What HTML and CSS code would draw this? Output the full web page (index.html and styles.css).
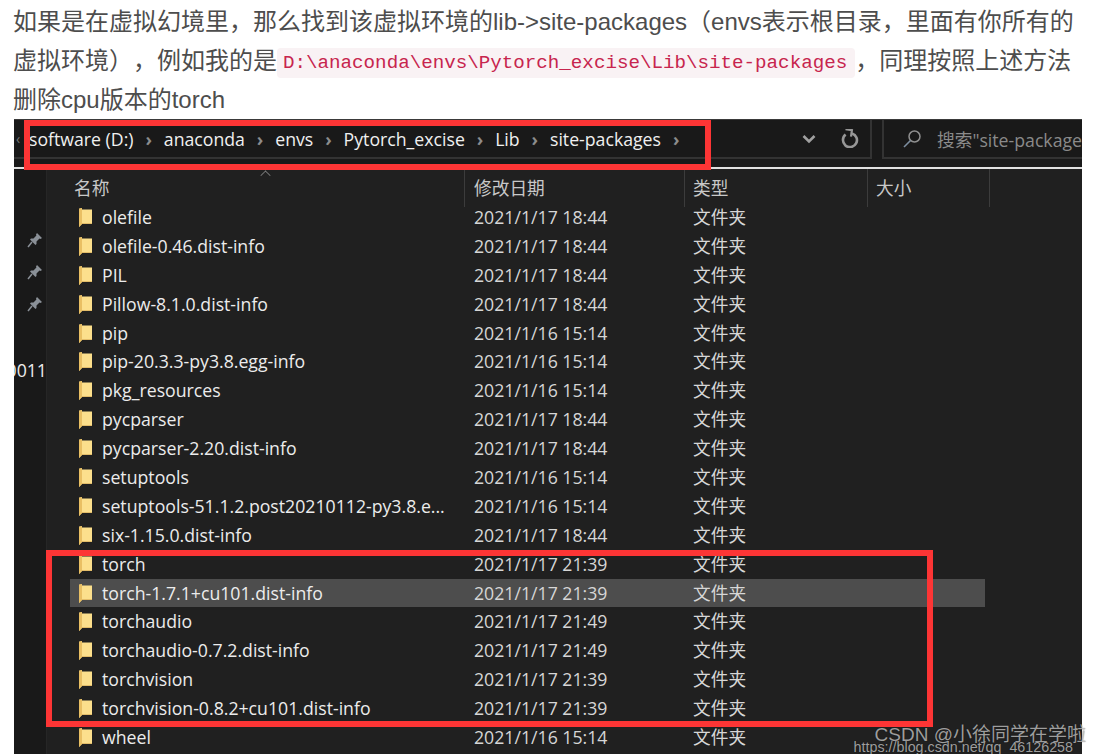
FILE: index.html
```html
<!DOCTYPE html>
<html lang="zh-CN">
<head>
    <meta charset="UTF-8">
    <title>删除cpu版本的torch</title>
    <link rel="stylesheet" href="styles.css">
</head>
<body>
    <svg class="defs" width="0" height="0">
        <symbol id="folder" viewBox="0 0 13 19">
            <path d="M0 .8 L3 0 V1.5 H13 V16 H3 L0 19 Z" fill="#fcdf8c"/>
            <path d="M0 .8 L3 0 V1.5 H3 V16 L0 19 Z" fill="#e9bf63"/>
            <path d="M3 15 H13 V16 H3 Z" fill="#e3bd6a"/>
        </symbol>
        <symbol id="pin" viewBox="0 0 16 16">
            <path d="M10 1 L15 6 L13.5 7 L12.5 6.6 L9.5 9.5 L9.5 12 L8.5 13 L3 7.5 L4 6.5 L6.5 6.5 L9.4 3.5 L9 2.5 Z" fill="#8a9097"/>
            <path d="M5 10 L1 15" stroke="#8a9097" stroke-width="1.5"/>
        </symbol>
    </svg>

    <p class="intro">如果是在虚拟幻境里，那么找到该虚拟环境的lib-&gt;site-packages（envs表示根目录，里面有你所有的虚拟环境），例如我的是<code>D:\anaconda\envs\Pytorch_excise\Lib\site-packages</code>，同理按照上述方法删除cpu版本的torch</p>

    <div class="explorer">
        <div class="toolbar">
            <div class="address">
                <span class="back">‹</span>
                <div class="crumbs">
                    <span>software (D:)</span><i>›</i>
                    <span>anaconda</span><i>›</i>
                    <span>envs</span><i>›</i>
                    <span>Pytorch_excise</span><i>›</i>
                    <span>Lib</span><i>›</i>
                    <span>site-packages</span><i>›</i>
                </div>
                <div class="tool-btn">
                    <svg width="14" height="10" viewBox="0 0 14 10"><path d="M1.5 2 L7 7.5 L12.5 2" fill="none" stroke="#a0a0a0" stroke-width="2.6"/></svg>
                </div>
                <div class="tool-btn">
                    <svg width="18" height="19" viewBox="0 0 18 19"><path d="M4.6 5.6 A7 7 0 1 0 11 4.4" fill="none" stroke="#979797" stroke-width="2.6"/><path d="M4 1 H10.5 V7.5" fill="none" stroke="#979797" stroke-width="2.2" transform="rotate(8 10 4)"/></svg>
                </div>
            </div>
            <div class="search">
                <svg width="20" height="20" viewBox="0 0 20 20"><circle cx="12.5" cy="7.5" r="5.5" fill="none" stroke="#8f8f8f" stroke-width="1.5"/><path d="M8.5 11.5 L2 18" stroke="#7d8ea0" stroke-width="1.6"/></svg>
                <span>搜索"site-packages"</span>
            </div>
        </div>

        <div class="body">
            <div class="nav">
                <div class="pins">
                    <svg width="16" height="16"><use href="#pin"/></svg>
                    <svg width="16" height="16"><use href="#pin"/></svg>
                    <svg width="16" height="16"><use href="#pin"/></svg>
                </div>
                <div class="nav-label">0011</div>
            </div>
            <div class="main">
                <div class="list-head">
                    <div class="col-name"><span>名称</span><b class="sort"></b></div>
                    <div class="col-date">修改日期</div>
                    <div class="col-type">类型</div>
                    <div class="col-size">大小</div>
                </div>
                <ul class="files" id="files"></ul>
            </div>
        </div>

        <div class="mark mark-path"></div>
        <div class="mark mark-torch"></div>
    </div>

    <div class="watermark">
        <div>CSDN @小徐同学在学啦</div>
        <div class="url">https://blog.csdn.net/qq_46126258</div>
    </div>

    <script>
        const files = [
            ['olefile', '2021/1/17 18:44'],
            ['olefile-0.46.dist-info', '2021/1/17 18:44'],
            ['PIL', '2021/1/17 18:44'],
            ['Pillow-8.1.0.dist-info', '2021/1/17 18:44'],
            ['pip', '2021/1/16 15:14'],
            ['pip-20.3.3-py3.8.egg-info', '2021/1/16 15:14'],
            ['pkg_resources', '2021/1/16 15:14'],
            ['pycparser', '2021/1/17 18:44'],
            ['pycparser-2.20.dist-info', '2021/1/17 18:44'],
            ['setuptools', '2021/1/16 15:14'],
            ['setuptools-51.1.2.post20210112-py3.8.e...', '2021/1/16 15:14'],
            ['six-1.15.0.dist-info', '2021/1/17 18:44'],
            ['torch', '2021/1/17 21:39'],
            ['torch-1.7.1+cu101.dist-info', '2021/1/17 21:39'],
            ['torchaudio', '2021/1/17 21:49'],
            ['torchaudio-0.7.2.dist-info', '2021/1/17 21:49'],
            ['torchvision', '2021/1/17 21:39'],
            ['torchvision-0.8.2+cu101.dist-info', '2021/1/17 21:39'],
            ['wheel', '2021/1/16 15:14']
        ];

        const list = document.getElementById('files');
        files.forEach(function(f, i) {
            const li = document.createElement('li');
            li.className = i === 13 ? 'file selected' : 'file';
            li.innerHTML = '<svg class="folder" width="13" height="19"><use href="#folder"/></svg>'
                + '<span class="col-name">' + f[0] + '</span>'
                + '<span class="col-date">' + f[1] + '</span>'
                + '<span class="col-type">文件夹</span>';
            list.appendChild(li);
        });
    </script>
</body>
</html>
```

FILE: styles.css
```css
* {
    box-sizing: border-box;
}

html, body {
    height: 754px;
    overflow: hidden;
}

body {
    position: relative;
    margin: 0;
    padding: 0 20px 0 14px;
    background: #fff;
    font-family: "Liberation Sans", "Noto Sans CJK SC", sans-serif;
}

.defs {
    position: absolute;
}

/* Paragraph above the screenshot */
.intro {
    margin: 0 0 0 -1px;
    padding-top: 2px;
    height: 119px;
    font-size: 24px;
    line-height: 39px;
    color: #4d4d4d;
    text-spacing-trim: space-all;
    font-feature-settings: "chws" 0;
}

.intro code {
    display: inline-block;
    height: 30px;
    padding: 0 8px 0 6px;
    line-height: 30px;
    vertical-align: 1px;
    font-family: "Liberation Mono", monospace;
    font-size: 19.2px;
    color: #c7254e;
    background: #f9f2f4;
    border-radius: 4px;
}

/* Explorer window */
.explorer {
    position: relative;
    height: 635px;
    background: #202020;
    font-family: "Open Sans", "Noto Sans CJK SC", sans-serif;
    font-size: 17.7px;
    color: #ececec;
    overflow: hidden;
}

.toolbar {
    display: flex;
    height: 50px;
    background: #191919;
    border-top: 1px solid #3a3a3a;
    border-bottom: 2px solid #e0e0e0;
}

.address {
    display: flex;
    align-items: center;
    flex: none;
    width: 858px;
    height: 39px;
    border-right: 2px solid #333;
    border-bottom: 2px solid #333;
}

.back {
    width: 15px;
    padding-left: 2px;
    color: #777;
    font-size: 14px;
}

.crumbs {
    display: flex;
    align-items: center;
    width: 759px;
    color: #f0f0f0;
}

.crumbs i {
    width: 30.3px;
    text-align: center;
    font-style: normal;
    font-weight: 700;
    color: #8c8c8c;
}

.tool-btn {
    display: flex;
    justify-content: center;
    align-items: center;
    width: 41px;
    height: 36px;
}

.search {
    display: flex;
    align-items: center;
    gap: 15px;
    margin-left: 10px;
    padding-left: 18px;
    height: 39px;
    flex: 1;
    min-width: 0;
    overflow: hidden;
    white-space: nowrap;
    color: #8a8a8a;
    border-left: 2px solid #333;
    border-bottom: 2px solid #333;
}

.search svg {
    flex: none;
}

.body {
    display: flex;
}

.nav {
    flex: none;
    width: 33px;
    height: 585px;
    background: #191919;
    border-right: 1px solid #262626;
}

.pins {
    display: flex;
    flex-direction: column;
    align-items: flex-end;
    gap: 16px;
    padding: 63px 3px 0 0;
}

.nav-label {
    display: flex;
    justify-content: flex-end;
    overflow: hidden;
    margin: 46px -1px 0 0;
    line-height: 24px;
}

.main {
    flex: 1;
    padding-left: 23px;
}

.list-head {
    display: flex;
    height: 34px;
    line-height: 38px;
    color: #c8c8c8;
}

.list-head > div {
    height: 38px;
    border-right: 1px solid #3c3c3c;
}

.col-name {
    position: relative;
    flex: none;
    width: 395px;
    padding-left: 4px;
}

.col-date {
    flex: none;
    width: 220px;
    padding-left: 9px;
}

.col-type {
    flex: none;
    width: 183px;
    padding-left: 8px;
}

.col-size {
    flex: none;
    width: 122px;
    padding-left: 8px;
}

.sort {
    position: absolute;
    top: 2px;
    left: 191px;
    width: 9px;
    height: 9px;
    border-top: 1px solid #8a8a8a;
    border-left: 1px solid #8a8a8a;
    transform: rotate(45deg) scale(0.8);
}

.files {
    position: relative;
    margin: 0;
    padding: 0;
    list-style: none;
}

.file {
    display: flex;
    align-items: center;
    width: 915px;
    height: 28.9px;
    line-height: 29px;
}

.file.selected {
    background: #4d4d4d;
}

.folder {
    flex: none;
    margin-left: 9px;
}

.file .col-name {
    width: 373px;
    padding-left: 10px;
    white-space: nowrap;
}

.file .col-date,
.file .col-type {
    color: #d6d6d6;
}

/* Red boxes drawn over the screenshot */
.mark {
    position: absolute;
    border: 6px solid #fd3535;
}

.mark-path {
    top: 1px;
    left: 10px;
    width: 687px;
    height: 50px;
}

.mark-torch {
    top: 431px;
    left: 32px;
    width: 887px;
    height: 177px;
}

.watermark {
    position: absolute;
    right: 16px;
    bottom: 0;
    text-align: right;
    font-family: "Liberation Sans", "Noto Sans CJK SC", sans-serif;
    font-size: 19px;
    line-height: 20px;
    color: rgba(205, 205, 205, 0.75);
    text-shadow: 0 0 1px rgba(0, 0, 0, 0.5);
}

.watermark .url {
    margin: -2px 13px 0 0;
    padding-bottom: 2px;
    font-size: 14.3px;
    line-height: 9px;
}
```
